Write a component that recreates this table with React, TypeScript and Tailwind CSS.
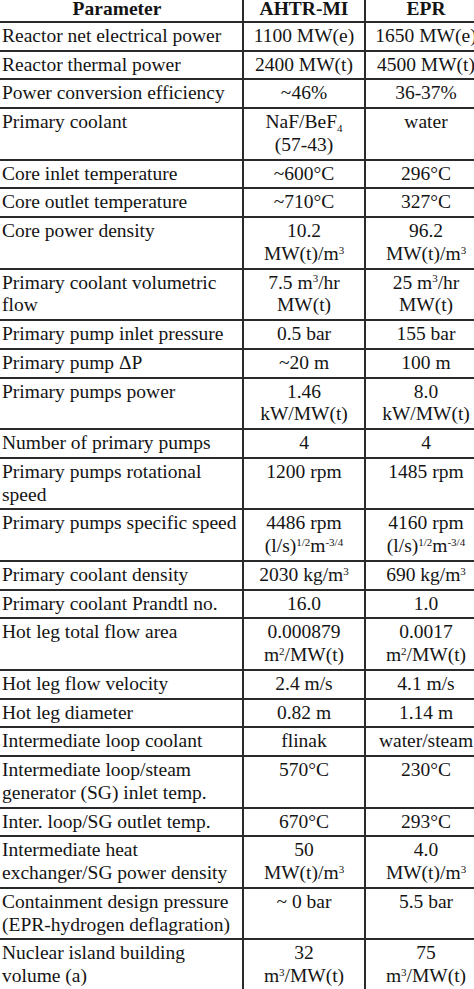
import React from "react";

type Row = { p: React.ReactNode; a: React.ReactNode; b: React.ReactNode };

const Sup = ({ children }: { children: React.ReactNode }) => (
  <sup className="text-[11px] top-[-0.55em]">{children}</sup>
);

const m3 = (
  <>
    m<Sup>3</Sup>
  </>
);

const rows: Row[] = [
  { p: "Reactor net electrical power", a: "1100 MW(e)", b: "1650 MW(e)" },
  { p: "Reactor thermal power", a: "2400 MW(t)", b: "4500 MW(t)" },
  { p: "Power conversion efficiency", a: "~46%", b: "36-37%" },
  {
    p: "Primary coolant",
    a: (
      <>
        NaF/BeF<sub className="text-[11px] bottom-[-0.35em]">4</sub>
        <br />
        (57-43)
      </>
    ),
    b: "water",
  },
  { p: "Core inlet temperature", a: "~600°C", b: "296°C" },
  { p: "Core outlet temperature", a: "~710°C", b: "327°C" },
  {
    p: "Core power density",
    a: (
      <>
        10.2
        <br />
        MW(t)/{m3}
      </>
    ),
    b: (
      <>
        96.2
        <br />
        MW(t)/{m3}
      </>
    ),
  },
  {
    p: (
      <>
        Primary coolant volumetric
        <br />
        flow
      </>
    ),
    a: (
      <>
        7.5 {m3}/hr
        <br />
        MW(t)
      </>
    ),
    b: (
      <>
        25 {m3}/hr
        <br />
        MW(t)
      </>
    ),
  },
  { p: "Primary pump inlet pressure", a: "0.5 bar", b: "155 bar" },
  { p: "Primary pump ΔP", a: "~20 m", b: "100 m" },
  {
    p: "Primary pumps power",
    a: (
      <>
        1.46
        <br />
        kW/MW(t)
      </>
    ),
    b: (
      <>
        8.0
        <br />
        kW/MW(t)
      </>
    ),
  },
  { p: "Number of primary pumps", a: "4", b: "4" },
  {
    p: (
      <>
        Primary pumps rotational
        <br />
        speed
      </>
    ),
    a: "1200 rpm",
    b: "1485 rpm",
  },
  {
    p: "Primary pumps specific speed",
    a: (
      <>
        4486 rpm
        <br />
        (l/s)<Sup>1/2</Sup>m<Sup>-3/4</Sup>
      </>
    ),
    b: (
      <>
        4160 rpm
        <br />
        (l/s)<Sup>1/2</Sup>m<Sup>-3/4</Sup>
      </>
    ),
  },
  { p: "Primary coolant density", a: <>2030 kg/{m3}</>, b: <>690 kg/{m3}</> },
  { p: "Primary coolant Prandtl no.", a: "16.0", b: "1.0" },
  {
    p: "Hot leg total flow area",
    a: (
      <>
        0.000879
        <br />
        m<Sup>2</Sup>/MW(t)
      </>
    ),
    b: (
      <>
        0.0017
        <br />
        m<Sup>2</Sup>/MW(t)
      </>
    ),
  },
  { p: "Hot leg flow velocity", a: "2.4 m/s", b: "4.1 m/s" },
  { p: "Hot leg diameter", a: "0.82 m", b: "1.14 m" },
  { p: "Intermediate loop coolant", a: "flinak", b: "water/steam" },
  {
    p: (
      <>
        Intermediate loop/steam
        <br />
        generator (SG) inlet temp.
      </>
    ),
    a: "570°C",
    b: "230°C",
  },
  { p: "Inter. loop/SG outlet temp.", a: "670°C", b: "293°C" },
  {
    p: (
      <>
        Intermediate heat
        <br />
        exchanger/SG power density
      </>
    ),
    a: (
      <>
        50
        <br />
        MW(t)/{m3}
      </>
    ),
    b: (
      <>
        4.0
        <br />
        MW(t)/{m3}
      </>
    ),
  },
  {
    p: (
      <>
        Containment design pressure
        <br />
        (EPR-hydrogen deflagration)
      </>
    ),
    a: "~ 0 bar",
    b: "5.5 bar",
  },
  {
    p: (
      <>
        Nuclear island building
        <br />
        volume (a)
      </>
    ),
    a: (
      <>
        32
        <br />
        {m3}/MW(t)
      </>
    ),
    b: (
      <>
        75
        <br />
        {m3}/MW(t)
      </>
    ),
  },
];

const cell = "border-2 border-[#2a2a2a] align-top px-0 whitespace-nowrap";

export default function App() {
  return (
    <div className="w-[474px] h-[989px] overflow-hidden bg-white">
      <table
        className="-ml-[10px] -mt-[4px] w-[496px] min-w-[496px] border-collapse table-fixed text-[19.5px] leading-[22.75px] text-[#141414]"
        style={{ fontFamily: '"Liberation Serif", "Times New Roman", serif' }}
      >
        <colgroup>
          <col className="w-[252px]" />
          <col className="w-[122px]" />
          <col className="w-[122px]" />
        </colgroup>
        <thead>
          <tr className="font-bold">
            <th className={`${cell} text-center py-0`}>Parameter</th>
            <th className={`${cell} text-center py-0`}>AHTR-MI</th>
            <th className={`${cell} text-center py-0`}>EPR</th>
          </tr>
        </thead>
        <tbody>
          {rows.map((r, i) => (
            <tr key={i}>
              <td className={`${cell} py-[2px] text-left pl-[10px]`}>{r.p}</td>
              <td className={`${cell} py-[2px] text-center`}>{r.a}</td>
              <td className={`${cell} py-[2px] text-center`}>{r.b}</td>
            </tr>
          ))}
        </tbody>
      </table>
    </div>
  );
}
